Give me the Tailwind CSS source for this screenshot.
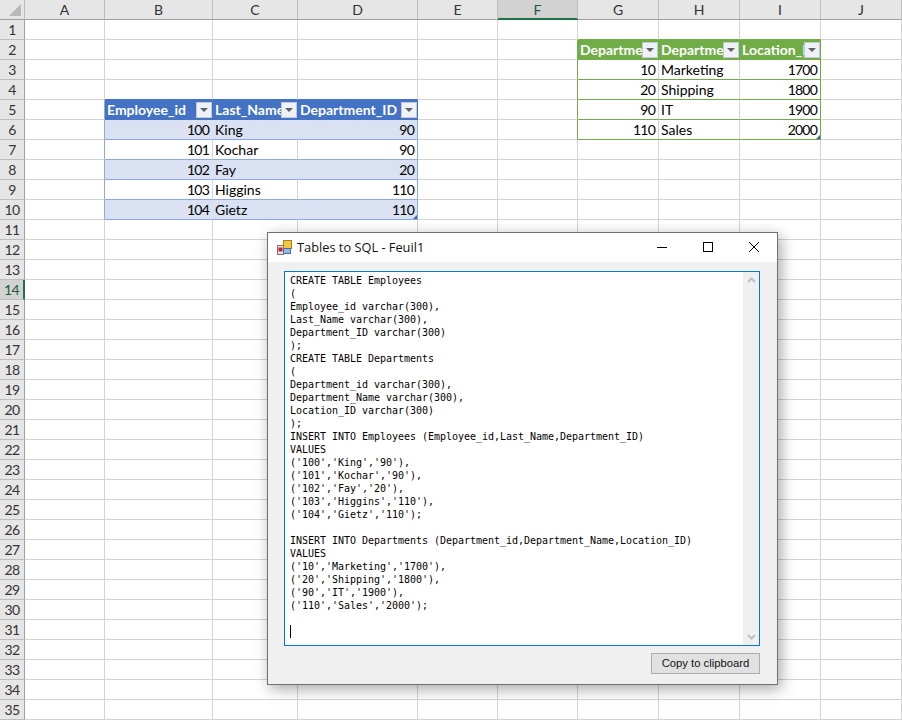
<!DOCTYPE html>
<html lang="en">
<head>
    <meta charset="UTF-8">
    <title>Tables to SQL - Feuil1</title>
    <script src="https://cdn.jsdelivr.net/npm/@tailwindcss/browser@4"></script>
</head>
<body class="bg-white overflow-hidden">
    <div class="relative w-[902px] h-[721px] overflow-hidden font-['Lato',sans-serif] text-[14px] text-black">
        <!-- Sheet grid, cells are filled in below -->
        <div id="sheet" class="grid grid-cols-[25px_80px_108px_85px_120px_80px_80px_81px_81px_81px_81px] auto-rows-[20px]"></div>

        <!-- Dialog -->
        <div class="absolute left-[267px] top-[232px] w-[511px] h-[453px] flex flex-col bg-[#f0f0f0] border border-[#6f6f6f] shadow-[3px_4px_14px_rgba(0,0,0,0.35)] text-[12px]">
            <div class="h-[29px] shrink-0 bg-white flex items-center pl-[9px]">
                <svg width="15" height="15" viewBox="0 0 15 15" class="shrink-0">
                    <rect x="0.5" y="5.5" width="6" height="9" fill="#f0e0e0" stroke="#777"/>
                    <rect x="1.5" y="7.5" width="4" height="4" fill="#d02020"/>
                    <rect x="6.5" y="0.5" width="8" height="8" fill="#f5c53a" stroke="#a08020"/>
                    <rect x="6.5" y="8.5" width="7" height="5" fill="#8fb8e8" stroke="#4a70a8"/>
                </svg>
                <span class="ml-[5px] font-['Open_Sans',sans-serif] text-[12.8px] text-[#111]">Tables to SQL - Feuil1</span>
                <div class="ml-auto flex items-center h-full">
                    <svg width="46" height="29" viewBox="0 0 46 29"><path d="M18 14.5h10" stroke="#000"/></svg>
                    <svg width="46" height="29" viewBox="0 0 46 29"><rect x="18.5" y="9.5" width="9" height="9" fill="none" stroke="#000"/></svg>
                    <svg width="46" height="29" viewBox="0 0 46 29"><path d="M18 9l10 10M28 9L18 19" stroke="#000" fill="none"/></svg>
                </div>
            </div>
            <div class="flex-1 flex flex-col pl-4 pr-[17px] pt-[9px]">
                <div class="relative h-[375px] bg-white border border-[#0078d7]">
                    <pre class="pl-[5px] pt-[2px] font-['DejaVu_Sans_Mono',monospace] text-[10px] leading-[13px] tracking-[-0.02px] text-black">CREATE TABLE Employees
(
Employee_id varchar(300),
Last_Name varchar(300),
Department_ID varchar(300)
);
CREATE TABLE Departments
(
Department_id varchar(300),
Department_Name varchar(300),
Location_ID varchar(300)
);
INSERT INTO Employees (Employee_id,Last_Name,Department_ID)
VALUES
('100','King','90'),
('101','Kochar','90'),
('102','Fay','20'),
('103','Higgins','110'),
('104','Gietz','110');

INSERT INTO Departments (Department_id,Department_Name,Location_ID)
VALUES
('10','Marketing','1700'),
('20','Shipping','1800'),
('90','IT','1900'),
('110','Sales','2000');

<span class="inline-block w-px h-[13px] bg-black align-top"></span></pre>
                    <div class="absolute right-0 top-0 bottom-0 w-4 bg-[#f0f0f0] flex flex-col justify-between items-center py-[5px]">
                        <svg width="9" height="6" viewBox="0 0 9 6"><path d="M1 5l3.5-3.5L8 5" fill="none" stroke="#c0c0c0" stroke-width="2"/></svg>
                        <svg width="9" height="6" viewBox="0 0 9 6"><path d="M1 1l3.5 3.5L8 1" fill="none" stroke="#c0c0c0" stroke-width="2"/></svg>
                    </div>
                </div>
                <div class="mt-[7px] flex justify-end">
                    <button class="w-[109px] h-[21px] bg-[#e1e1e1] border border-[#adadad] font-['Liberation_Sans',sans-serif] text-[11.25px] text-[#111] leading-none">Copy to clipboard</button>
                </div>
            </div>
        </div>
    </div>

    <script>
        const letters = ['', 'A', 'B', 'C', 'D', 'E', 'F', 'G', 'H', 'I', 'J'];
        const filter = '<span class="absolute right-0 top-[2px] w-[16px] h-[16px] bg-[#eef1f8] border border-[#c4c9d6] flex items-center justify-center"><svg width="8" height="4" viewBox="0 0 8 4"><path d="M0 0h8L4 4z" fill="#606060"/></svg></span>';
        const corner = '<svg class="absolute right-0 bottom-0" width="4" height="4" viewBox="0 0 4 4"><path d="M4 0v4H0z" fill="#3f5fb0"/></svg>';

        const blue = {
            5: ['Employee_id', 'Last_Name', 'Department_ID'],
            6: ['100', 'King', '90'],
            7: ['101', 'Kochar', '90'],
            8: ['102', 'Fay', '20'],
            9: ['103', 'Higgins', '110'],
            10: ['104', 'Gietz', '110'],
        };
        const green = {
            2: ['Departme', 'Departme', 'Location_I'],
            3: ['10', 'Marketing', '1700'],
            4: ['20', 'Shipping', '1800'],
            5: ['90', 'IT', '1900'],
            6: ['110', 'Sales', '2000'],
        };

        function dataCell(val, pos, row, table) {
            const isGreen = table === green;
            const first = isGreen ? 2 : 5;
            const last = isGreen ? 6 : 10;
            const align = pos === 1 ? 'pl-[2px]' : 'justify-end pr-[3px] tracking-[-0.8px]';
            if (row === first) {
                const head = isGreen
                    ? 'bg-[#70ad47] border-[#70ad47]'
                    : 'bg-[#4472c4] border-[#4472c4]';
                return `<div class="relative overflow-hidden flex items-center pl-[2px] border-r border-b whitespace-nowrap font-bold text-white ${head}">${val}${filter}</div>`;
            }
            let cls;
            if (isGreen) {
                cls = 'border-b border-b-[#70ad47] border-r ' + (pos === 2 ? 'border-r-[#70ad47]' : 'border-r-[#d4d4d4]');
            } else if (row % 2 === 0) {
                cls = 'bg-[#d9e1f2] border-b border-b-[#8ea9db] border-r ' + (pos === 2 ? 'border-r-[#8ea9db]' : 'border-r-[#d9e1f2]');
            } else {
                cls = 'border-b border-b-[#8ea9db] border-r ' + (pos === 2 ? 'border-r-[#8ea9db]' : 'border-r-[#d4d4d4]');
            }
            return `<div class="relative flex items-center whitespace-nowrap ${align} ${cls}">${val}${row === last && pos === 2 ? corner : ''}</div>`;
        }

        let html = '';
        // column headers
        letters.forEach((l, i) => {
            if (i === 0) {
                html += '<div class="relative bg-[#e6e6e6] border-r border-b border-r-[#bdbdbd] border-b-[#9f9f9f]"><svg class="absolute right-[3px] bottom-[3px]" width="12" height="12" viewBox="0 0 12 12"><path d="M12 0v12H0z" fill="#b8b8b8"/></svg></div>';
            } else if (l === 'F') {
                html += '<div class="flex items-center justify-center bg-[#d2d2d2] border-r border-b-2 border-r-[#bdbdbd] border-b-[#217346] text-[#215c3a]">F</div>';
            } else {
                html += `<div class="flex items-center justify-center bg-[#e6e6e6] border-r border-b border-r-[#bdbdbd] border-b-[#9f9f9f] text-[#333]">${l}</div>`;
            }
        });

        for (let row = 1; row <= 35; row++) {
            const active = row === 14;
            html += active
                ? `<div class="flex items-center justify-center bg-[#d2d2d2] border-r-2 border-b border-r-[#217346] border-b-[#bdbdbd] tracking-[-0.5px] text-[#215c3a]">${row}</div>`
                : `<div class="flex items-center justify-center bg-[#e6e6e6] border-r border-b border-r-[#9f9f9f] border-b-[#bdbdbd] tracking-[-0.5px] text-[#333]">${row}</div>`;
            for (let col = 1; col <= 10; col++) {
                if (blue[row] && col >= 2 && col <= 4) {
                    html += dataCell(blue[row][col - 2], col - 2, row, blue);
                } else if (green[row] && col >= 7 && col <= 9) {
                    html += dataCell(green[row][col - 7], col - 7, row, green);
                } else {
                    let r = 'border-r-[#d4d4d4]';
                    let b = 'border-b-[#d4d4d4]';
                    if (col === 1 && blue[row]) r = 'border-r-[#8ea9db]';
                    if (col === 6 && green[row]) r = 'border-r-[#70ad47]';
                    if (row === 4 && col >= 2 && col <= 4) b = 'border-b-[#4472c4]';
                    if (row === 1 && col >= 7 && col <= 9) b = 'border-b-[#70ad47]';
                    html += `<div class="border-r border-b ${r} ${b}"></div>`;
                }
            }
        }
        document.getElementById('sheet').innerHTML = html;
    </script>
</body>
</html>
